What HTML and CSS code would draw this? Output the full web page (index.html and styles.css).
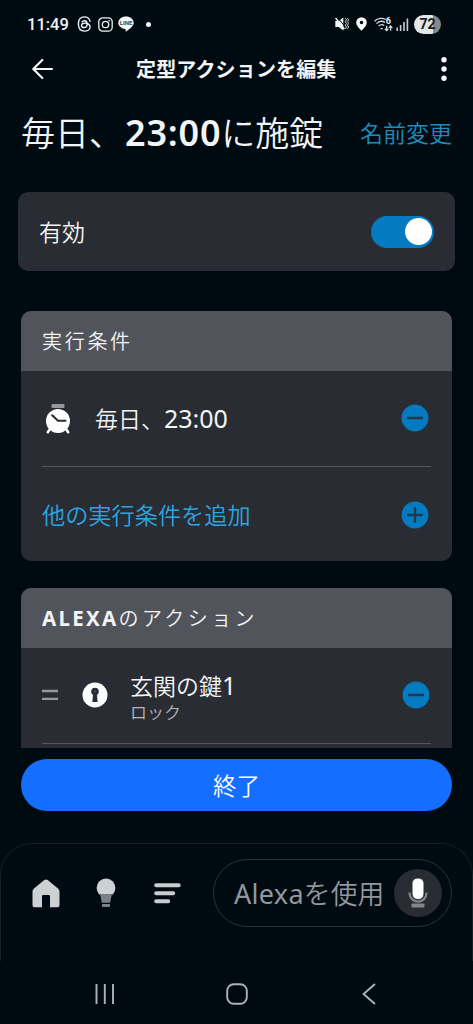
FILE: index.html
```html
<!DOCTYPE html>
<html lang="ja">
<head>
<meta charset="utf-8">
<meta name="viewport" content="width=device-width, initial-scale=1">
<title>定型アクションを編集</title>
<link rel="stylesheet" href="styles.css">
</head>
<body>
<div class="screen">
  <div class="status">
    <span class="clock">11:49</span>
    <svg class="threads" width="15" height="16" viewBox="0 0 15 16" fill="none" stroke="#eef1f3" stroke-width="1.4" stroke-linecap="round"><path d="M13 5.2C12.3 2.3 10.4.9 7.5.9 3.500.9 1.400 3.600 1.400 8s2.100 7.100 6.100 7.100c3.100 0 5.600-1.700 5.600-4.100 0-2.600-2.400-3.900-5.200-3.900-2 0-3.400.8-3.400 2.300 0 1.300 1.100 2.100 2.600 2.100 2 0 3-1.300 3-3.600 0-2.200-.9-3.200-2.600-3.200-1.100 0-1.900.4-2.400 1.200"/></svg>
    <svg class="insta" width="15" height="15" viewBox="0 0 15 15" fill="none" stroke="#eef1f3" stroke-width="1.3"><rect x=".8" y=".8" width="13.400" height="13.400" rx="4"/><circle cx="7.500" cy="7.500" r="3.200"/><circle cx="11.200" cy="3.800" r=".5" fill="#eef1f3" stroke-width=".7"/></svg>
    <span class="line-app"><svg width="16" height="16" viewBox="0 0 16 16"><path d="M8 .6c4.300 0 7.700 2.700 7.700 6.200 0 1.800-1 3.200-2.500 4.700-1.700 1.700-4 3.300-5 3.900-.8.400-.6-.3-.5-1 .1-.8 0-1.300-.7-1.400C3 12.400.3 9.900.3 6.800.3 3.300 3.700.6 8 .6z" fill="#f3f5f6"/></svg><b>LINE</b></span>
    <i class="dot"></i>
    <svg class="mute" width="14" height="16" viewBox="0 0 14 16"><path d="M.3 5h3.400L8.300 1.600v12.800L3.700 11H.3z" fill="#f3f5f6"/><path d="M2.400 1.400l7.500 9" stroke="#000a11" stroke-width="1"/><path d="M.5 2l8.800 11" stroke="#f3f5f6" stroke-width="1.500"/><path d="M10.200 2.200l1.300 1.600-1.300 1.800 1.300 1.800-1.300 1.800 1.300 1.800-1.300 1.800M12.400 2.200l1.300 1.600-1.300 1.800 1.300 1.800-1.300 1.800 1.300 1.800-1.300 1.800" fill="none" stroke="#f3f5f6" stroke-width=".9"/></svg>
    <svg class="pin" width="11" height="14" viewBox="0 0 11 14"><path fill-rule="evenodd" d="M5.500.2a5.300 5.300 0 0 1 5.300 5.300c0 3-2.700 5.500-5.300 8.300C2.900 11 .2 8.500.2 5.500A5.300 5.300 0 0 1 5.500.2zm0 3.500a1.800 1.800 0 1 0 0 3.600 1.800 1.800 0 0 0 0-3.600z" fill="#f7f8f9"/></svg>
    <span class="wifi"><svg width="19" height="15" viewBox="0 0 19 15" fill="none" stroke="#d5dadd" stroke-width="1.300"><path d="M.5 4.200C3.800.9 8.600.5 11.800 2.500M2.500 6.600c2.300-2.300 5.800-2.800 8.500-1.200M4.600 8.900c1.600-1.400 4-1.600 5.700-.3"/><path d="M6 11l1.600 1.800L9.200 11z" fill="#d5dadd" stroke="none"/><path d="M12.600 8.800v4.600M10.800 11.700l1.800 1.900 1.800-1.900M16.600 13.700V9.100M14.800 10.900l1.800-1.900 1.800 1.900"/></svg><b>6</b></span>
    <svg class="signal" width="13" height="13" viewBox="0 0 13 13"><path d="M1.200 9.500V13M4.600 7V13M8 4V13M11.400.5V13" stroke="#c7ccd0" stroke-width="1.600"/></svg>
    <span class="battery">72</span>
  </div>

  <header class="appbar">
    <svg width="22" height="20" viewBox="0 0 22 20" fill="none" stroke="#f5f7f8" stroke-width="2.200" stroke-linecap="round" stroke-linejoin="round"><path d="M10.300 1L1.300 10l9 9M1.500 10H20"/></svg>
    <span class="appbar-title">定型アクションを編集</span>
    <svg width="6" height="24" viewBox="0 0 6 24" fill="#f7f8f9"><circle cx="3" cy="2.700" r="2.700"/><circle cx="3" cy="12" r="2.700"/><circle cx="3" cy="21.300" r="2.700"/></svg>
  </header>

  <main>
    <div class="name-row">
      <h1>毎日、<b>23:00</b>に施錠</h1>
      <a class="rename">名前変更</a>
    </div>

    <div class="enable"><span class="label">有効</span><span class="toggle"><i></i></span></div>

    <section class="card trigger">
      <h2>実行条件</h2>
      <div class="row">
        <svg class="alarm" width="26" height="30" viewBox="0 0 26 30"><rect x="6.500" y="0" width="13" height="4" rx="1" fill="#94979b"/><path d="M5 25l-2.200 3.200M21 25l2.200 3.200" stroke="#fff" stroke-width="2.600" stroke-linecap="round"/><circle cx="13" cy="17" r="12" fill="#fff"/><path d="M7.200 11.200l5.800 5.600h7.500" fill="none" stroke="#292c33" stroke-width="2" stroke-linecap="round" stroke-linejoin="round"/></svg>
        <span class="label">毎日、<span class="num">23:00</span></span>
        <svg class="act" width="28" height="28" viewBox="0 0 28 28"><circle cx="14" cy="14" r="13.400" fill="#047bc1"/><path d="M7.200 14h13.600" stroke="#22394c" stroke-width="2.500" stroke-linecap="round"/></svg>
      </div>
      <div class="row add">
        <span class="label">他の実行条件を追加</span>
        <svg class="act" width="28" height="28" viewBox="0 0 28 28"><circle cx="14" cy="14" r="13.400" fill="#047bc1"/><path d="M7.200 14h13.600M14 7.200v13.600" stroke="#22394c" stroke-width="2.300" stroke-linecap="round"/></svg>
      </div>
    </section>

    <section class="card actions">
      <h2><b>ALEXA</b>のアクション</h2>
      <div class="row">
        <svg width="16" height="12" viewBox="0 0 16 12"><path d="M0 2h16M0 9.800h16" stroke="#96999d" stroke-width="2.300"/></svg>
        <svg class="lock" width="26" height="26" viewBox="0 0 26 26"><circle cx="13" cy="13" r="12.500" fill="#fff"/><path d="M11.200 10h3.600l.8 9.900h-5.200z" fill="#292c33"/><circle cx="13" cy="9.500" r="3.800" fill="#292c33"/><circle cx="13" cy="9.300" r=".9" fill="#555960"/></svg>
        <span class="device"><span>玄関の鍵<span class="num">1</span></span><small>ロック</small></span>
        <svg class="act" width="28" height="28" viewBox="0 0 28 28"><circle cx="14" cy="14" r="13.400" fill="#047bc1"/><path d="M7.200 14h13.600" stroke="#22394c" stroke-width="2.500" stroke-linecap="round"/></svg>
      </div>
    </section>
  </main>

  <button class="done">終了</button>

  <nav class="tabs">
    <svg width="28" height="29" viewBox="0 0 28 29"><path d="M12.300 1.100Q14 0 15.700 1.100L26 9.500Q27.500 11 27.500 12.500V26.300a2 2 0 0 1-2 2H18V17.300q0-1.200-1.200-1.200h-5.600q-1.200 0-1.200 1.200v11H2.500a2 2 0 0 1-2-2V12.500Q.5 11 2 9.500z" fill="#ced1d4"/></svg>
    <svg class="bulb" width="20" height="30" viewBox="0 0 20 30"><path d="M4.300 16.800h11.400l-1.500 8H5.800zM6 26h8v1.800q0 1.200-1.200 1.200H7.200Q6 29 6 27.800z" fill="#7b8086"/><path d="M3.200 16.500Q.6 13.600.6 10a9.400 9.400 0 0 1 18.800 0q0 3.600-2.600 6.500z" fill="#ced1d4"/></svg>
    <svg class="menu" width="27" height="21" viewBox="0 0 27 21"><path d="M2.200 2.300h22.500M2.200 10.300h17M2.200 18.200h12" stroke="#c9cdd2" stroke-width="4" stroke-linecap="round"/></svg>
    <div class="ask">
      <span class="ask-text"><span class="latin">Alexa</span>を使用</span>
      <span class="mic"><svg width="20" height="30" viewBox="0 0 20 30"><path d="M1.500 14.500v.6a8.500 8.500 0 0 0 17 0v-.6" fill="none" stroke="#83868b" stroke-width="2.200"/><rect x="4" y="0" width="12" height="21.500" rx="5.500" fill="#fff" stroke="#292c33" stroke-width="1"/><rect x="3.500" y="25.500" width="13" height="4" rx="1" fill="#83868b"/></svg></span>
    </div>
  </nav>

  <div class="sysnav">
    <svg width="20" height="20" viewBox="0 0 20 20"><path d="M2.500 0v20M10.800 0v20M19 0v20" stroke="#aeb3b8" stroke-width="1.900"/></svg>
    <svg class="home-key" width="22" height="22" viewBox="0 0 22 22"><rect x="1.200" y="1.200" width="19.600" height="19.600" rx="6.500" fill="none" stroke="#aeb3b8" stroke-width="1.900"/></svg>
    <svg width="14" height="22" viewBox="0 0 14 22"><path d="M13 1L1.600 11 13 21" fill="none" stroke="#aeb3b8" stroke-width="1.900"/></svg>
  </div>
</div>
</body>
</html>
```
FILE: styles.css
```css
* { box-sizing: border-box; }
body { margin: 0; background: #000a11; color: #f2f4f5; font-family: "Noto Sans CJK JP", sans-serif; font-weight: 350; }
svg { display: block; flex: none; }
h1, h2 { margin: 0; }
.screen { width: 473px; height: 1024px; overflow: hidden; display: flex; flex-direction: column; }
.status, .appbar, .name-row, .enable, .row, .tabs, .ask, .sysnav, .mic, .battery { display: flex; align-items: center; }
.screen > *, main > *, .row > * { flex-shrink: 0; }

.status { height: 48px; padding: 0 32px 0 27px; }
.clock { width: 50px; font: 500 16.500px/20px Roboto, sans-serif; padding-top: 2px; }
.insta { margin-left: 6px; }
.line-app { display: grid; width: 16px; margin-left: 5px; }
.line-app > * { grid-area: 1 / 1; }
.line-app b { font: 700 6px/14px Roboto, sans-serif; color: #444; text-align: center; }
.dot { width: 5px; height: 5px; border-radius: 50%; background: #f3f5f6; margin-left: 12px; }
.mute { margin-left: auto; }
.pin { margin-left: 7px; }
.wifi { display: grid; width: 19px; margin-left: 7px; }
.wifi > * { grid-area: 1 / 1; }
.wifi b { font: 700 9px/8px Roboto, sans-serif; justify-self: end; margin-right: 2px; }
.signal { margin-left: 3px; }
.battery { width: 27px; height: 19px; margin-left: 5px; border-radius: 10px; justify-content: center; background: linear-gradient(90deg, #e3e5e7 72%, #85898d 72%); color: #14191d; font: 700 14px/19px Roboto, sans-serif; }

.appbar { height: 42px; padding: 0 26px 0 32px; }
.appbar-title { font-size: 20px; line-height: 30px; font-weight: 700; margin: 0 auto 0 82px; letter-spacing: .15px; }

main { height: 658px; overflow: hidden; display: flex; flex-direction: column; align-items: stretch; }
.name-row { height: 84px; padding: 0 21px; justify-content: space-between; }
h1 { font-size: 34px; line-height: 50px; font-weight: 350; white-space: nowrap; padding-top: 1px; }
h1 b { font: 600 36px/50px "Noto Sans", sans-serif; letter-spacing: .8px; margin-left: 2px; }
.rename { font-size: 23px; color: #1d8dbd; padding-bottom: 1px; }
.enable { height: 79px; margin: 18px 18px 0; padding: 0 21px; border-radius: 10px; background: #292c33; justify-content: space-between; font-size: 23px; }
.enable .label, .row .label { padding-bottom: 1px; }
.toggle { width: 63px; height: 32px; border-radius: 16px; background: #047bc1; padding: 2.500px; display: flex; justify-content: flex-end; }
.toggle i { width: 27px; height: 27px; border-radius: 50%; background: #fff; }
.card { margin: 0 21px; padding: 0 21px; background: #292c33; border-radius: 10px; overflow: hidden; }
.card h2 { height: 60px; margin: 0 -21px; padding: 0 21px; background: #52545b; font-size: 20px; line-height: 60px; font-weight: 350; letter-spacing: 2.700px; }
.card h2 b { font: 700 20.500px/60px "Noto Sans", sans-serif; letter-spacing: 2.300px; }
.row { height: 96px; padding-bottom: 1px; border-bottom: 1px solid #53565c; font-size: 23px; }
.act { margin-left: auto; margin-right: 2px; }
.num { font: 400 25px/32px "Noto Sans", sans-serif; }
.trigger { height: 250px; margin-top: 40px; }
.alarm { margin: 2px 0 0 3px; }
.alarm + .label { margin-left: 24px; }
.row.add { border: 0; color: #2ba5e0; font-size: 23.200px; }
.actions { height: 180px; margin-top: 27px; }
.actions h2 { letter-spacing: 3.400px; }
.lock { margin-left: 24px; }
.device { margin-left: 22px; padding-top: 3px; display: flex; flex-direction: column; line-height: 31px; font-family: "Liberation Sans", "Noto Sans CJK JP", sans-serif; }
.device small { font-size: 17px; line-height: 22px; color: #b3b6ba; }
.actions .act { margin-right: 1px; }
.done { height: 52px; margin: 11px 21px 0; border: 0; border-radius: 26px; background: #146eff; color: #fff; font: 350 23.500px/52px "Noto Sans CJK JP", sans-serif; padding: 0; }

.tabs { height: 118px; margin-top: 32px; padding: 0 20px 19px 31px; border: 1px solid #151f26; border-bottom: 0; border-radius: 32px 32px 0 0; }
.bulb { margin-left: 36px; }
.menu { margin-left: 38px; }
.ask { width: 239px; height: 68px; margin-left: auto; border: 1px solid #29323a; border-radius: 34px; padding: 0 9px 0 20px; justify-content: space-between; color: #92979e; }
.ask-text { font-size: 26.800px; line-height: 40px; white-space: nowrap; }
.latin { font: 400 27px/40px "Noto Sans", sans-serif; letter-spacing: .3px; }
.mic { width: 48px; height: 48px; border-radius: 50%; background: #292c33; justify-content: center; }
.sysnav { height: 63px; padding: 3px 97px 0 94px; justify-content: space-between; }
.home-key { margin-right: 3px; }
```
